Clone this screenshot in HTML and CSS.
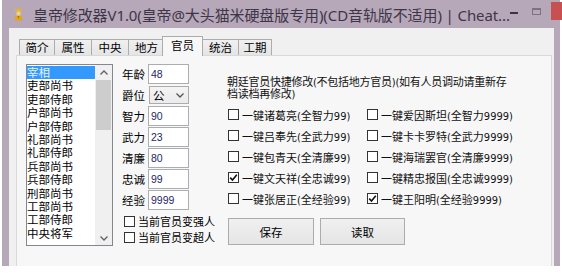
FILE: index.html
```html
<!DOCTYPE html>
<html lang="zh-CN">
<head>
<meta charset="utf-8">
<title>皇帝修改器</title>
<link rel="stylesheet" href="styles.css">
</head>
<body>
<div class="window">
  <div class="titlebar">
    <svg class="app-icon" width="11" height="14" viewBox="0 0 11 14">
      <path d="M2 1 L4 3 L5.5 0.5 L7 3 L9 1 L8.5 4.5 L2.5 4.5 Z" fill="#e8b820"/>
      <circle cx="5.5" cy="6.5" r="2.2" fill="#f2d27a"/>
      <path d="M1.5 13.5 L2.5 9 L8.5 9 L9.5 13.5 Z" fill="#e0a818"/>
      <path d="M4.5 9 L5.5 12 L6.5 9 Z" fill="#c07010"/>
    </svg>
    <span class="title">皇帝修改器V1.0(皇帝@大头猫米硬盘版专用)(CD音轨版不适用) | Cheat...</span>
    <div class="controls">
      <span class="ctl-min"></span>
      <span class="ctl-max"></span>
      <span class="ctl-close">
        <svg width="10" height="10" viewBox="0 0 10 10"><path d="M1.5 1.5 L8.5 8.5 M8.5 1.5 L1.5 8.5" stroke="#fff" stroke-width="2"/></svg>
      </span>
    </div>
  </div>
  <div class="client">
    <div class="tabs">
      <div class="tab w36">简介</div>
      <div class="tab w38">属性</div>
      <div class="tab w38">中央</div>
      <div class="tab w37">地方</div>
      <div class="tab active">官员</div>
      <div class="tab w37">统治</div>
      <div class="tab w34">工期</div>
    </div>
    <div class="panel">
      <div class="listbox">
        <ul class="items">
          <li class="sel">宰相</li>
          <li>吏部尚书</li>
          <li>吏部侍郎</li>
          <li>户部尚书</li>
          <li>户部侍郎</li>
          <li>礼部尚书</li>
          <li>礼部侍郎</li>
          <li>兵部尚书</li>
          <li>兵部侍郎</li>
          <li>刑部尚书</li>
          <li>工部尚书</li>
          <li>工部侍郎</li>
          <li>中央将军</li>
        </ul>
        <div class="scrollbar">
          <div class="arrow">
            <svg width="8" height="5" viewBox="0 0 8 5"><path d="M0.5 4.5 L4 1 L7.5 4.5" fill="none" stroke="#606060" stroke-width="1.3"/></svg>
          </div>
          <div class="thumb"></div>
          <div class="track"></div>
          <div class="arrow">
            <svg width="8" height="5" viewBox="0 0 8 5"><path d="M0.5 0.5 L4 4 L7.5 0.5" fill="none" stroke="#606060" stroke-width="1.3"/></svg>
          </div>
        </div>
      </div>

      <div class="fields">
        <div class="field"><span class="label">年龄</span><span class="input">48</span></div>
        <div class="field"><span class="label">爵位</span>
          <span class="select"><span class="sel-text">公</span>
            <svg width="8" height="5" viewBox="0 0 8 5"><path d="M0.5 0.5 L4 4 L7.5 0.5" fill="none" stroke="#555" stroke-width="1.3"/></svg>
          </span>
        </div>
        <div class="field"><span class="label">智力</span><span class="input">90</span></div>
        <div class="field"><span class="label">武力</span><span class="input">23</span></div>
        <div class="field"><span class="label">清廉</span><span class="input">80</span></div>
        <div class="field"><span class="label">忠诚</span><span class="input">99</span></div>
        <div class="field"><span class="label">经验</span><span class="input">9999</span></div>
        <div class="opts">
          <div class="opt"><span class="cb"></span><span>当前官员变强人</span></div>
          <div class="opt"><span class="cb"></span><span>当前官员变超人</span></div>
        </div>
      </div>

      <div class="quick">
        <p class="note">朝廷官员快捷修改(不包括地方官员)(如有人员调动请重新存档读档再修改)</p>
        <div class="grid">
          <div class="qopt"><span class="cb"></span><span>一键诸葛亮(全智力99)</span></div>
          <div class="qopt"><span class="cb"></span><span>一键爱因斯坦(全智力9999)</span></div>
          <div class="qopt"><span class="cb"></span><span>一键吕奉先(全武力99)</span></div>
          <div class="qopt"><span class="cb"></span><span>一键卡卡罗特(全武力9999)</span></div>
          <div class="qopt"><span class="cb"></span><span>一键包青天(全清廉99)</span></div>
          <div class="qopt"><span class="cb"></span><span>一键海瑞罢官(全清廉9999)</span></div>
          <div class="qopt"><span class="cb checked"><svg width="9" height="9" viewBox="0 0 9 9"><path d="M1.2 4.6 L3.5 7 L7.8 1.8" fill="none" stroke="#111" stroke-width="1.6"/></svg></span><span>一键文天祥(全忠诚99)</span></div>
          <div class="qopt"><span class="cb"></span><span>一键精忠报国(全忠诚9999)</span></div>
          <div class="qopt"><span class="cb"></span><span>一键张居正(全经验99)</span></div>
          <div class="qopt"><span class="cb checked"><svg width="9" height="9" viewBox="0 0 9 9"><path d="M1.2 4.6 L3.5 7 L7.8 1.8" fill="none" stroke="#111" stroke-width="1.6"/></svg></span><span>一键王阳明(全经验9999)</span></div>
        </div>
        <div class="buttons">
          <button class="btn save">保存</button>
          <button class="btn load">读取</button>
        </div>
      </div>
    </div>
  </div>
</div>
</body>
</html>
```

FILE: styles.css
```css
* { box-sizing: border-box; }

html, body {
  margin: 0;
  padding: 0;
  background: #ffffff;
}

body {
  font-family: "Noto Sans CJK SC", sans-serif;
  color: #000;
  width: 562px;
  height: 278px;
  overflow: hidden;
}

.window {
  margin-left: 2px;
  width: 558px;
  height: 266px;
  background: #b6a7b9;
  padding: 0 6px 0 7px;
  display: flex;
  flex-direction: column;
}

.titlebar {
  height: 28px;
  display: flex;
  align-items: center;
  flex: none;
}

.app-icon {
  margin-left: 4px;
  flex: none;
}

.title {
  margin-left: 9px;
  font-family: "Noto Sans", "Noto Sans CJK SC", sans-serif;
  font-size: 15px;
  color: #3e3648;
  white-space: nowrap;
  letter-spacing: -0.1px;
  flex: none;
}

.controls {
  margin-left: auto;
  display: flex;
  align-items: flex-start;
  align-self: flex-start;
  height: 28px;
  flex: none;
}

.ctl-min {
  width: 8px;
  height: 2px;
  background: #3a3440;
  margin-top: 12px;
}

.ctl-max {
  width: 9px;
  height: 7px;
  border: 1px solid #7c7284;
  border-top-width: 2px;
  margin-top: 8px;
  margin-left: 14px;
}

.ctl-close {
  width: 38px;
  height: 18px;
  margin-top: 2px;
  margin-left: 10px;
  margin-right: 1px;
  background: #c75050;
  display: flex;
  align-items: center;
  justify-content: center;
}

.client {
  flex: 1;
  background: #f0f0f0;
  padding: 8px 2px 0 7px;
  display: flex;
  flex-direction: column;
  overflow: hidden;
}

.tabs {
  display: flex;
  align-items: flex-end;
  height: 19px;
  padding-left: 3px;
  position: relative;
  z-index: 1;
  flex: none;
}

.tab {
  height: 16px;
  border: 1px solid #acacac;
  border-bottom: none;
  margin-right: -1px;
  background: linear-gradient(#f0f0f0, #e5e5e5);
  font-size: 11.5px;
  line-height: 14px;
  text-align: center;
  color: #000;
}

.w34 { width: 34px; }
.w36 { width: 36px; }
.w37 { width: 37px; }
.w38 { width: 38px; }

.tab.active {
  width: 41px;
  height: 20px;
  margin: 0 -1px 0 -2px;
  background: #f7f7f7;
  border-color: #acacac;
  line-height: 16px;
  position: relative;
  top: 1px;
}

.panel {
  flex: 1;
  border: 1px solid #d9d9d9;
  border-bottom: none;
  background: #f7f7f7;
  display: flex;
  align-items: flex-start;
  padding-top: 8px;
}

.listbox {
  margin-left: 9px;
  width: 87px;
  height: 182px;
  border: 1px solid #828790;
  background: #fff;
  display: flex;
  flex: none;
}

.items {
  list-style: none;
  margin: 0;
  padding: 1px 0 0 0;
  flex: 1;
  font-size: 11.5px;
  line-height: 13.4px;
  white-space: nowrap;
  overflow: hidden;
}

.items li {
  height: 13.4px;
  padding-left: 0;
}

.items li.sel {
  background: #3399ff;
  color: #e6f2ff;
}

.scrollbar {
  width: 17px;
  background: #f0f0f0;
  display: flex;
  flex-direction: column;
  flex: none;
}

.arrow {
  height: 14px;
  display: flex;
  align-items: center;
  justify-content: center;
  flex: none;
}

.thumb {
  margin: 1px 1px 0 1px;
  height: 50px;
  background: #cdcdcd;
  flex: none;
}

.track { flex: 1; }

.fields {
  margin-left: 9px;
  width: 105px;
  flex: none;
}

.field {
  height: 21px;
  display: flex;
  align-items: flex-start;
}

.label {
  width: 26px;
  font-size: 11.5px;
  line-height: 20px;
  flex: none;
}

.input {
  width: 41px;
  height: 20px;
  border: 1px solid #abadb3;
  background: #fff;
  font-family: "Liberation Sans", sans-serif;
  font-size: 10.5px;
  line-height: 18px;
  padding-left: 2px;
  color: #1e2862;
}

.select {
  width: 40px;
  height: 18px;
  margin-top: 1px;
  margin-left: 1px;
  border: 1px solid #acacac;
  background: linear-gradient(#f4f4f4, #ebebeb);
  display: flex;
  align-items: center;
  justify-content: space-between;
  padding: 0 4px 0 3px;
}

.sel-text {
  font-size: 11.5px;
  line-height: 16px;
}

.opts {
  padding-top: 2px;
}

.opt {
  height: 16px;
  display: flex;
  align-items: center;
  padding-left: 2px;
  font-size: 11px;
  white-space: nowrap;
}

.cb {
  width: 11px;
  height: 11px;
  border: 1px solid #333;
  background: #fff;
  margin-right: 3px;
  display: flex;
  align-items: center;
  justify-content: center;
  flex: none;
}

.quick {
  flex: none;
  width: 320px;
  padding-top: 13px;
}

.note {
  margin: 0;
  width: 288px;
  font-family: "Liberation Sans Narrow", "DejaVu Sans Condensed", "Noto Sans CJK SC", sans-serif;
  font-size: 11px;
  line-height: 11.5px;
  letter-spacing: -0.25px;
  color: #111;
}

.grid {
  margin-top: 4px;
  display: grid;
  grid-template-columns: 139px 160px;
  grid-auto-rows: 21px;
}

.qopt {
  display: flex;
  align-items: center;
  padding-left: 1px;
  font-family: "Liberation Sans Narrow", "DejaVu Sans Condensed", "Noto Sans CJK SC", sans-serif;
  font-size: 11px;
  white-space: nowrap;
  color: #111;
}

.buttons {
  margin-top: 9px;
  padding-left: 1px;
  display: flex;
  gap: 6px;
}

.btn {
  height: 27px;
  border: 1px solid #acacac;
  background: linear-gradient(#f0f0f0, #e5e5e5);
  font-family: "Noto Sans CJK SC", sans-serif;
  font-size: 11.5px;
  color: #000;
  padding: 0;
}

.save { width: 86px; }
.load { width: 85px; }
```
